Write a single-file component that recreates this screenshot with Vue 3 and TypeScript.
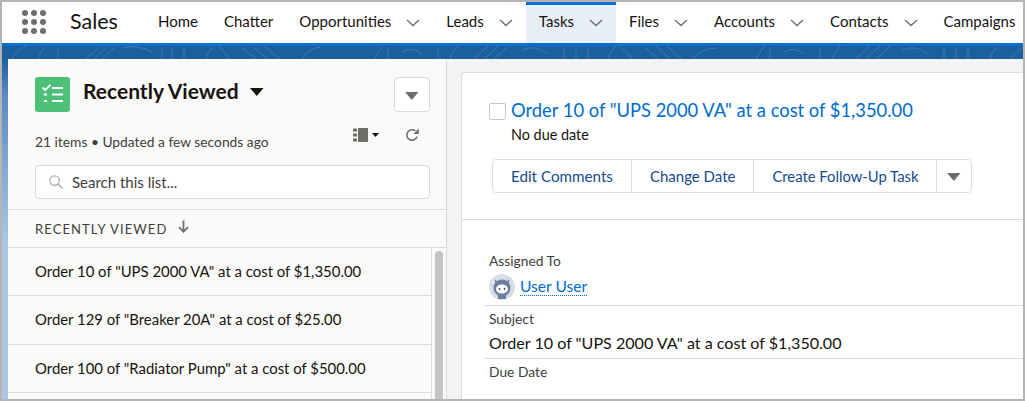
<script setup lang="ts">
interface NavItem {
  label: string
  menu: boolean
  active?: boolean
}

const navItems: NavItem[] = [
  { label: 'Home', menu: false },
  { label: 'Chatter', menu: false },
  { label: 'Opportunities', menu: true },
  { label: 'Leads', menu: true },
  { label: 'Tasks', menu: true, active: true },
  { label: 'Files', menu: true },
  { label: 'Accounts', menu: true },
  { label: 'Contacts', menu: true },
  { label: 'Campaigns', menu: false },
]

const orders = [
  'Order 10 of "UPS 2000 VA" at a cost of $1,350.00',
  'Order 129 of "Breaker 20A" at a cost of $25.00',
  'Order 100 of "Radiator Pump" at a cost of $500.00',
]

const actions = ['Edit Comments', 'Change Date', 'Create Follow-Up Task']
</script>

<template>
  <div class="frame">
    <header class="topbar">
      <button type="button" class="launcher" aria-label="App launcher">
        <span v-for="n in 9" :key="n" class="launcher__dot" />
      </button>
      <span class="app-name">Sales</span>
      <nav class="nav">
        <a
          v-for="item in navItems"
          :key="item.label"
          class="nav__item"
          :class="{ 'nav__item--active': item.active }"
        >
          {{ item.label }}
          <svg v-if="item.menu" class="nav__chevron" viewBox="0 0 14 8" width="14" height="8">
            <path d="M1 1l6 5.5L13 1" fill="none" stroke="#706e6b" stroke-width="1.4" />
          </svg>
        </a>
      </nav>
    </header>

    <div class="workspace">
      <svg class="texture" viewBox="0 0 1025 13" width="1025" height="13" aria-hidden="true">
        <g fill="none" stroke="#5f8fbe" stroke-width="0.8" opacity="0.7">
          <path d="M10 13Q14 5 24 0M36 13Q38 6 44 0M56 13V2M84 13L98 0M92 13L106 0M100 13L114 0M120 2Q136 -2 150 6" />
          <path d="M160 13V1M170 13V3M182 13V1M204 13Q206 5 212 0M228 13Q222 5 216 0M240 2L254 13M250 0L266 13M262 0L278 13M300 13Q304 4 318 1" />
          <path d="M372 13L380 0M386 13V1M400 6Q410 0 420 8M436 13V2M448 13Q450 6 456 0M472 13L486 0M482 13L496 0M492 13L506 0M520 4Q532 -2 546 8" />
          <path d="M562 13V1M574 13V3M586 13V1M606 13Q608 5 614 0M630 13Q624 5 618 0M644 2L656 13M654 0L668 13M664 0L680 13M690 13Q700 2 716 2" />
          <path d="M754 13L762 0M768 13V1M782 6Q792 0 802 8M818 13V2M830 13Q832 6 838 0M854 13L868 0M864 13L878 0M874 13L888 0M900 4Q914 -2 926 8" />
          <path d="M942 13V1M954 13V3M966 13V1M988 13Q990 5 996 0M1008 13L1022 0" />
        </g>
      </svg>

      <aside class="list-panel">
        <div class="list-head">
          <div class="list-head__top">
            <span class="tasks-icon">
              <svg viewBox="0 0 35 35" width="35" height="35">
                <path d="M7.5 10.500l2.500 2.500 5.500-5" fill="none" stroke="#fff" stroke-width="1.800" />
                <g fill="#fff">
                  <rect x="17" y="10" width="11" height="2" />
                  <rect x="17" y="16.500" width="11" height="2" />
                  <rect x="17" y="23" width="11" height="2" />
                  <rect x="9" y="16.500" width="3" height="2" />
                  <rect x="9" y="23" width="3" height="2" />
                </g>
              </svg>
            </span>
            <h1 class="list-title">Recently Viewed</h1>
            <svg class="list-title__caret" viewBox="0 0 14 8" width="14" height="8">
              <path d="M0 0h13.500L6.800 8z" fill="#16130f" />
            </svg>
            <button type="button" class="menu-btn" aria-label="List menu">
              <svg viewBox="0 0 14 8" width="14" height="8">
                <path d="M0 0h13.500L6.800 8z" fill="#706e6b" />
              </svg>
            </button>
          </div>
          <div class="list-head__meta">
            <span class="list-count">21 items • Updated a few seconds ago</span>
            <span class="view-toggle">
              <svg viewBox="0 0 15 14" width="15" height="14">
                <g fill="#706e6b">
                  <rect x="0" y="0.500" width="4" height="3" />
                  <rect x="0" y="5.500" width="4" height="3" />
                  <rect x="0" y="10.500" width="4" height="3" />
                  <rect x="5" y="0" width="10" height="14" />
                </g>
              </svg>
              <svg viewBox="0 0 7 4" width="7" height="4">
                <path d="M0 0h7L3.500 4z" fill="#16130f" />
              </svg>
            </span>
            <svg class="refresh" viewBox="0 0 14 14" width="14" height="14">
              <path d="M12 8.500A5.200 5.200 0 1 1 10.400 3" fill="none" stroke="#706e6b" stroke-width="1.600" />
              <path d="M13.800 0.600v5.400H8.400z" fill="#706e6b" />
            </svg>
          </div>
          <label class="search">
            <svg viewBox="0 0 14 14" width="14" height="14">
              <circle cx="5.600" cy="5.600" r="4.700" fill="none" stroke="#b0adab" stroke-width="1.300" />
              <path d="M9 9l4.500 4.500" stroke="#b0adab" stroke-width="1.500" />
            </svg>
            <span>Search this list...</span>
          </label>
        </div>

        <div class="column-head">
          <span>RECENTLY VIEWED</span>
          <svg viewBox="0 0 11 13" width="11" height="13">
            <path d="M5.500 0.500v11M1 7.200l4.500 4.600L10 7.200" fill="none" stroke="#706e6b" stroke-width="1.800" />
          </svg>
        </div>

        <div class="list-body">
          <ul class="orders">
            <li v-for="order in orders" :key="order" class="orders__row">{{ order }}</li>
          </ul>
          <div class="scrollbar"><span class="scrollbar__thumb" /></div>
        </div>
      </aside>

      <main class="detail">
        <section class="detail-card">
          <div class="task-head">
            <div class="task-title">
              <span class="checkbox" />
              <a class="task-title__link">Order 10 of "UPS 2000 VA" at a cost of $1,350.00</a>
            </div>
            <p class="task-due">No due date</p>
            <div class="actions">
              <button v-for="action in actions" :key="action" type="button" class="actions__btn">
                {{ action }}
              </button>
              <button type="button" class="actions__btn actions__btn--more" aria-label="More actions">
                <svg viewBox="0 0 14 8" width="14" height="8">
                  <path d="M0 0h13.500L6.800 8z" fill="#706e6b" />
                </svg>
              </button>
            </div>
          </div>

          <div class="fields">
            <div class="field field--owner">
              <div class="field__label">Assigned To</div>
              <div class="field__owner">
                <svg class="avatar" viewBox="0 0 26 26" width="26" height="26">
                  <circle cx="13" cy="13" r="13" fill="#d8dde6" />
                  <path d="M5.500 5.500l1.500 6h12l1.500-6-4 2.500a9 9 0 0 0-7 0z" fill="#6d7f9f" />
                  <circle cx="13" cy="14" r="8.500" fill="#6d7f9f" />
                  <ellipse cx="13" cy="15" rx="6" ry="4.600" fill="#fff" />
                  <circle cx="10.500" cy="15" r="0.900" fill="#32405a" />
                  <circle cx="15.500" cy="15" r="0.900" fill="#32405a" />
                  <path d="M9 21h8v4H9z" fill="#6d7f9f" />
                </svg>
                <a class="field__user">User User</a>
              </div>
            </div>
            <div class="field field--subject">
              <div class="field__label">Subject</div>
              <div class="field__value">Order 10 of "UPS 2000 VA" at a cost of $1,350.00</div>
            </div>
            <div class="field field--due">
              <div class="field__label">Due Date</div>
            </div>
          </div>
        </section>
      </main>
    </div>
  </div>
</template>

<style>
html,
body {
  margin: 0;
  overflow: hidden;
}
</style>

<style scoped>
.frame {
  box-sizing: border-box;
  width: 1025px;
  height: 401px;
  border: 2px solid #b4b4b4;
  display: flex;
  flex-direction: column;
  overflow: hidden;
  font-family: Lato, "Open Sans", sans-serif;
  color: #16130f;
  background: #fff;
}

.topbar {
  flex: none;
  height: 41px;
  display: flex;
  align-items: stretch;
  background: #fff;
  border-bottom: 3px solid #0070d2;
}

.launcher {
  flex: none;
  align-self: center;
  width: 24px;
  height: 24px;
  margin: 0 0 2px 20px;
  padding: 0;
  border: none;
  background: transparent;
  display: grid;
  grid-template-columns: repeat(3, 6px);
  gap: 3px;
  align-content: center;
}

.launcher__dot {
  width: 6px;
  height: 6px;
  border-radius: 50%;
  background: #706e6b;
}

.app-name {
  flex: none;
  align-self: center;
  margin: 0 0 3px 24px;
  width: 75px;
  font-size: 21.500px;
}

.nav {
  display: flex;
  white-space: nowrap;
}

.nav__item {
  display: flex;
  align-items: center;
  box-sizing: border-box;
  padding: 0 13px 6px;
  font-size: 15px;
  border-top: 3px solid transparent;
}

.nav__item--active {
  background: #e8eff9;
  border-top-color: #0070d2;
}

.nav__chevron {
  margin-left: 15px;
  margin-top: 3px;
}

.workspace {
  flex: 1;
  min-height: 0;
  position: relative;
  display: flex;
  padding: 13px 0 0 6px;
  background: linear-gradient(#1b5f9e 0, #1b5f9e 13px, #5d8cc2 50px, #adc6e4 200px);
}

.texture {
  position: absolute;
  left: 0;
  top: 0;
}

.list-panel {
  position: relative;
  flex: none;
  width: 439px;
  display: flex;
  flex-direction: column;
  background: #fafaf9;
  border-right: 1px solid #dddbda;
  box-sizing: border-box;
}

.list-head {
  padding: 18px 16px 10px 27px;
  border-bottom: 1px solid #dddbda;
}

.list-head__top {
  display: flex;
  align-items: flex-start;
}

.tasks-icon {
  flex: none;
  width: 35px;
  height: 35px;
  border-radius: 3px;
  background: #4bc076;
}

.tasks-icon svg {
  display: block;
}

.list-title {
  margin: 0 0 0 13px;
  font-size: 21px;
  line-height: 28px;
  font-weight: 700;
}

.list-title__caret {
  margin: 11px 0 0 11px;
}

.menu-btn {
  margin-left: auto;
  width: 36px;
  height: 35px;
  padding: 2px 0 0;
  border: 1px solid #dddbda;
  border-radius: 4px;
  background: #fff;
  display: flex;
  align-items: center;
  justify-content: center;
}

.list-head__meta {
  display: flex;
  align-items: flex-start;
  margin-top: 20px;
  height: 33px;
  font-size: 13.800px;
  color: #3e3e3c;
}

.list-count {
  line-height: 20px;
  flex: 1;
}

.view-toggle {
  display: flex;
  gap: 4px;
  margin-top: -4px;
  align-items: center;
  height: 14px;
}

.view-toggle svg:last-child {
  margin-top: -1px;
}

.refresh {
  margin: -4px 11px 0 26px;
}

.search {
  height: 34px;
  box-sizing: border-box;
  border: 1px solid #dddbda;
  border-radius: 4px;
  background: #fff;
  display: flex;
  align-items: center;
  gap: 9px;
  padding-left: 13px;
  font-size: 15px;
  color: #3e3e3c;
}

.column-head {
  flex: none;
  height: 38px;
  box-sizing: border-box;
  padding: 0 27px;
  display: flex;
  align-items: center;
  gap: 11px;
  font-size: 13px;
  letter-spacing: 1.100px;
  color: #3e3e3c;
  border-bottom: 1px solid #dddbda;
}

.column-head svg {
  margin-top: -4px;
}

.list-body {
  flex: 1;
  min-height: 0;
  display: flex;
  overflow: hidden;
}

.orders {
  flex: 1;
  margin: 0;
  padding: 0;
  list-style: none;
  border-right: 1px solid #dddbda;
}

.orders__row {
  height: 48.300px;
  box-sizing: border-box;
  padding: 0 0 1px 27px;
  display: flex;
  align-items: center;
  font-size: 14.900px;
  border-bottom: 1px solid #dddbda;
}

.scrollbar {
  flex: none;
  width: 14px;
  padding: 3px 0 0 3px;
  box-sizing: border-box;
}

.scrollbar__thumb {
  display: block;
  width: 8px;
  height: 200px;
  border-radius: 4px;
  background: #c4c4c4;
}

.detail {
  flex: 1;
  min-width: 0;
  padding: 13px 0 0 14px;
  background: #f3f3f3;
}

.detail-card {
  height: 100%;
  box-sizing: border-box;
  background: #fff;
  border: 1px solid #dddbda;
  border-right: none;
  border-bottom: none;
  border-top-left-radius: 4px;
}

.task-head {
  padding: 26px 26px 26px 27px;
  border-bottom: 1px solid #dddbda;
}

.task-title {
  display: flex;
  align-items: center;
  gap: 5px;
}

.checkbox {
  flex: none;
  width: 15px;
  height: 15px;
  border: 1px solid #c9c7c5;
  border-radius: 2px;
  margin-top: 2px;
}

.task-title__link {
  font-size: 18.350px;
  line-height: 22px;
  color: #006dcc;
}

.task-due {
  margin: 4px 0 0 22px;
  font-size: 14.400px;
  line-height: 20px;
}

.actions {
  display: inline-flex;
  margin: 14px 0 0 3px;
  height: 34px;
  box-sizing: border-box;
  border: 1px solid #dddbda;
  border-radius: 4px;
  background: #fff;
  vertical-align: top;
}

.actions__btn {
  padding: 0 18px;
  border: none;
  border-right: 1px solid #dddbda;
  background: transparent;
  font-family: inherit;
  font-size: 15px;
  color: #16498c;
}

.actions__btn:first-child {
  font-size: 15.200px;
}

.actions__btn:nth-child(3) {
  font-size: 14.800px;
}

.actions__btn--more {
  width: 34px;
  padding: 2px 0 0;
  border-right: none;
  display: flex;
  align-items: center;
  justify-content: center;
}

.fields {
  padding: 32px 0 0 22px;
}

.field {
  border-bottom: 1px solid #dddbda;
  padding-left: 5px;
}

.field--owner {
  padding-bottom: 4px;
}

.field__label {
  font-size: 13.800px;
  line-height: 18px;
  color: #3e3e3c;
}

.field__owner {
  display: flex;
  align-items: center;
  gap: 5px;
  height: 28px;
  margin-top: 3px;
}

.field__user {
  font-size: 15.600px;
  color: #006dcc;
  border-bottom: 1px dotted #0070d2;
  line-height: 17px;
}

.field--subject {
  padding: 4px 0 3px 5px;
}

.field__value {
  font-size: 16.100px;
  line-height: 24px;
  margin-top: 3px;
}

.field--due {
  border-bottom: none;
  padding-top: 4px;
}
</style>
